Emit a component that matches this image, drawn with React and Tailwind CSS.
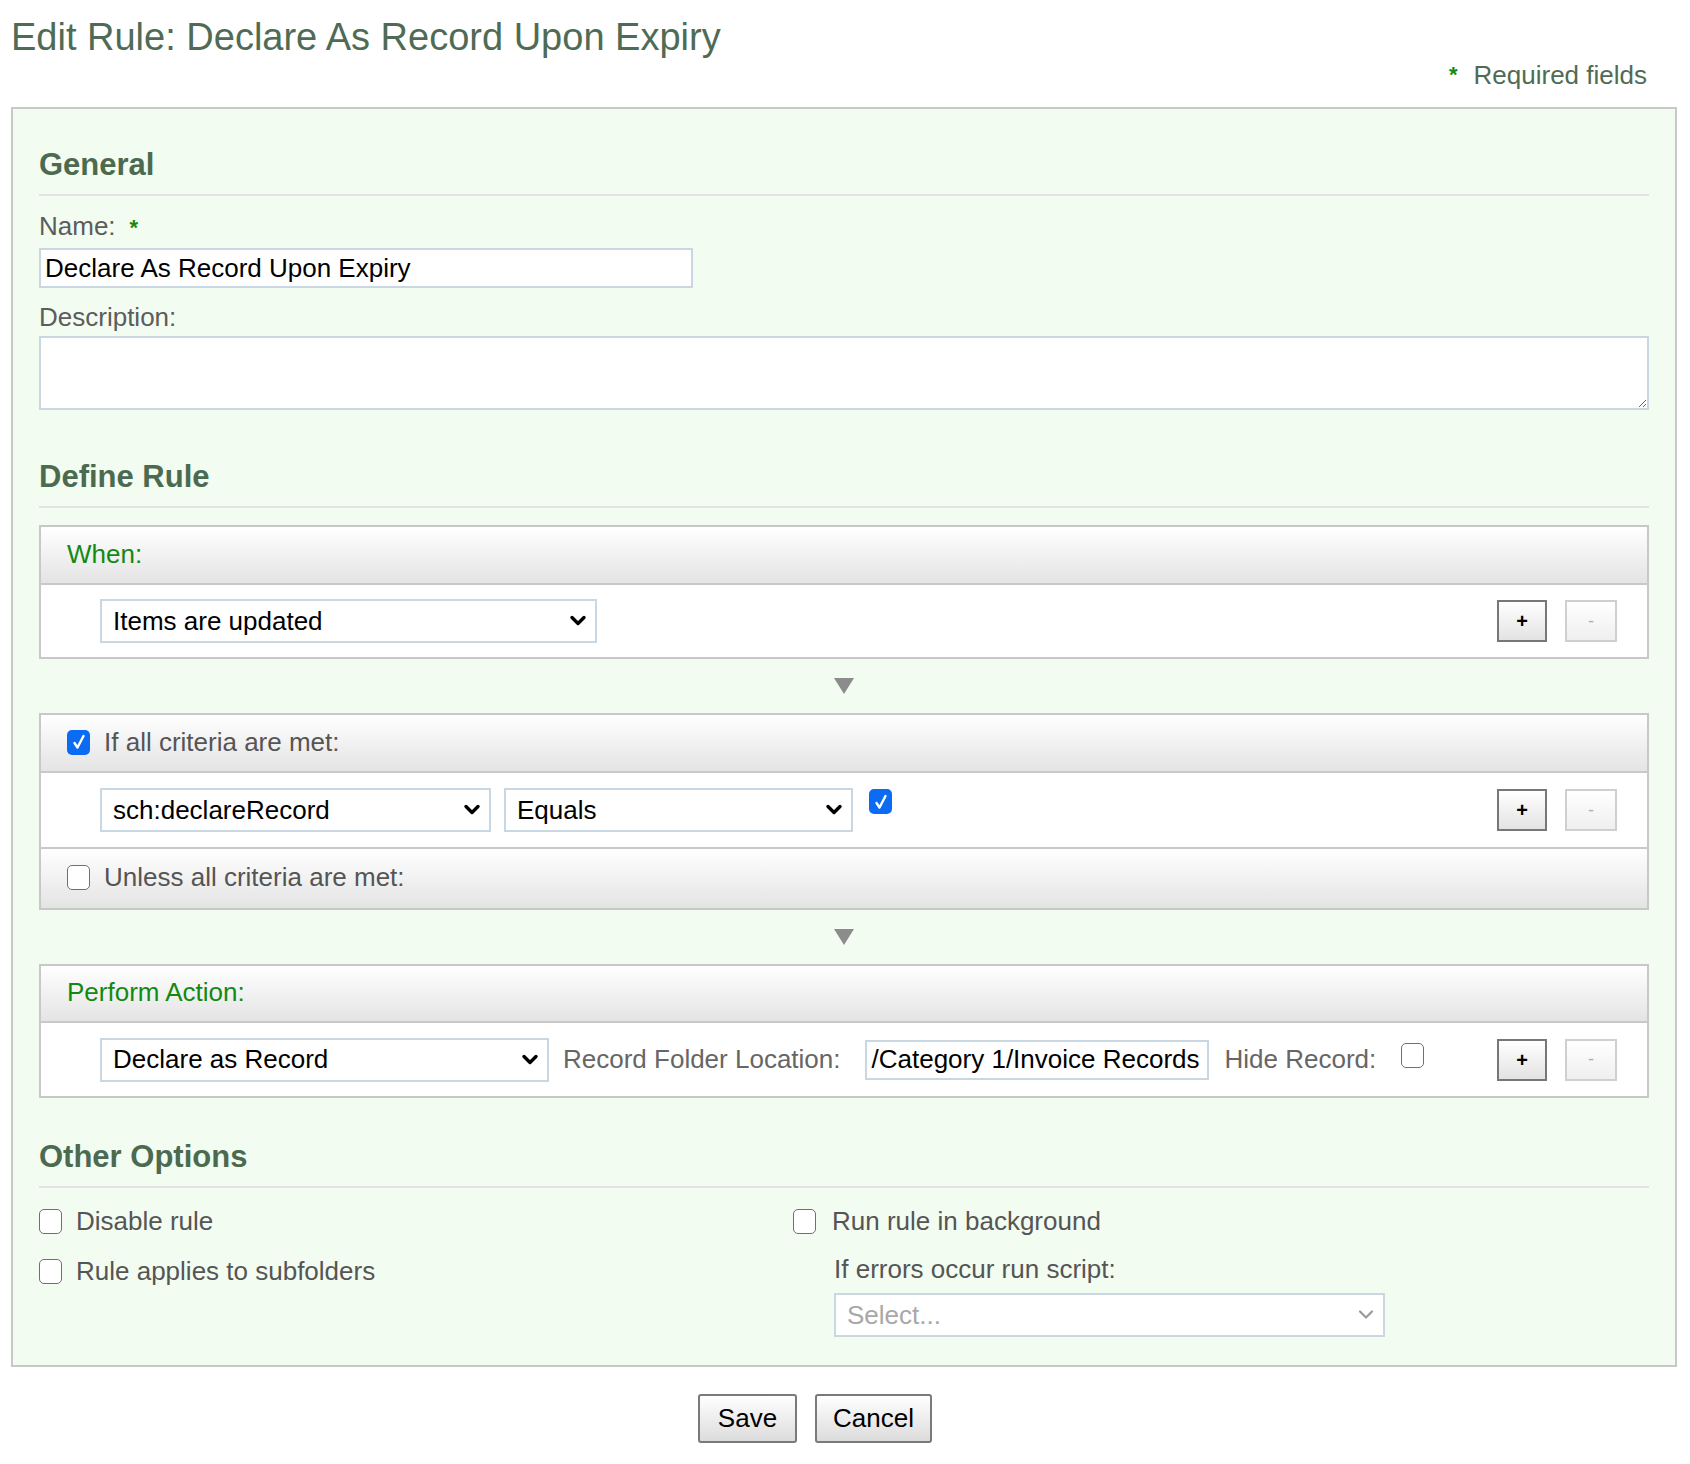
import React from 'react';

function Chevron({ color = '#000', thin }) {
  return (
    <svg width="18" height="12" viewBox="0 0 18 12" className="shrink-0">
      <polyline
        points="3,2.5 9,8.5 15,2.5"
        fill="none"
        stroke={color}
        strokeWidth={thin ? 2.2 : 3.4}
        strokeLinecap="round"
        strokeLinejoin="round"
      />
    </svg>
  );
}

function FakeSelect({ value, width, placeholder }) {
  return (
    <div
      className={`${width} h-[44px] flex items-center justify-between border-2 border-[#c9d7e3] bg-white pl-[11px] pr-[8px] text-[26px]`}
    >
      <span className={placeholder ? 'text-[#a8a8a8]' : 'text-black'}>{value}</span>
      <Chevron color={placeholder ? '#9a9a9a' : '#000'} thin={placeholder} />
    </div>
  );
}

function Check({ checked }) {
  if (checked) {
    return (
      <span className="inline-flex w-[23px] h-[25px] shrink-0 items-center justify-center rounded-[5px] bg-[#0b6cf3]">
        <svg width="14" height="16" viewBox="0 0 14 16">
          <polyline points="2.5,9 5.5,13.5 11.5,2" fill="none" stroke="#fff" strokeWidth="2.4" strokeLinecap="round" strokeLinejoin="round" />
        </svg>
      </span>
    );
  }
  return <span className="inline-block w-[23px] h-[25px] shrink-0 rounded-[5px] border-[1.5px] border-[#707070] bg-white"></span>;
}

function PlusMinus() {
  return (
    <div className="ml-auto flex items-center gap-[18px] pr-[30px]">
      <div className="w-[50px] h-[42px] flex items-center justify-center border-2 border-[#777] bg-linear-to-b from-white to-[#e3e3e3] text-[20px] font-bold text-black">
        +
      </div>
      <div className="w-[52px] h-[42px] flex items-center justify-center border-2 border-[#cfcfcf] bg-linear-to-b from-white to-[#efefef] text-[18px] text-[#b0b0b0]">
        -
      </div>
    </div>
  );
}

function Arrow() {
  return (
    <div className="h-[54px] flex items-center justify-center">
      <svg width="22" height="18" viewBox="0 0 22 18">
        <polygon points="1,1 21,1 11,17" fill="#8c8c8c" />
      </svg>
    </div>
  );
}

function BoxHeader({ children, height = 'h-[58px]', last }) {
  return (
    <div
      className={`${height} flex items-center gap-[14px] pl-[26px] pb-[2px] bg-linear-to-b from-white to-[#e4e4e4] text-[26px] ${
        last ? '' : 'border-b-2 border-[#c8c8c8]'
      }`}
    >
      {children}
    </div>
  );
}

function Heading({ children, className = '' }) {
  return (
    <h2 className={`text-[31px] font-bold leading-[36px] text-[#4b6a50] pb-[11px] border-b-2 border-[#e3e3e3] ${className}`}>
      {children}
    </h2>
  );
}

export default function App() {
  return (
    <div className="min-h-screen bg-white font-['Liberation_Sans',Arial,sans-serif]">
      {/* Title */}
      <h1 className="pl-[11px] pt-[14px] text-[38px] leading-[46px] text-[#4f6b55]">
        Edit Rule: Declare As Record Upon Expiry
      </h1>
      <div className="flex justify-end items-center pr-[43px] text-[26px] leading-[30px] text-[#4f6b55]">
        <span className="text-[#128a12] font-bold text-[22px] mr-[16px]">*</span>
        Required fields
      </div>

      {/* Form panel */}
      <div className="mt-[17px] ml-[11px] mr-[13px] border-2 border-[#c8c8c8] bg-[#f2fcf0] px-[26px] pt-[38px] pb-[28px]">
        <Heading>General</Heading>

        <div className="mt-[15px] text-[26px] leading-[30px] text-[#5c5c5c]">
          Name:<span className="ml-[14px] text-[#128a12] font-bold text-[22px]">*</span>
        </div>
        <input
          readOnly
          value="Declare As Record Upon Expiry"
          className="mt-[5px] block w-[654px] h-[40px] border-2 border-[#c9d7e3] bg-white px-[4px] text-[26px] text-black outline-none"
        />

        <div className="mt-[14px] text-[26px] leading-[30px] text-[#5c5c5c]">Description:</div>
        <textarea
          readOnly
          className="mt-[4px] block w-full h-[74px] border-2 border-[#c9d7e3] bg-white outline-none"
        ></textarea>

        <Heading className="mt-[49px]">Define Rule</Heading>

        {/* When */}
        <div className="mt-[17px] border-2 border-[#c8c8c8] bg-white">
          <BoxHeader>
            <span className="text-[#128a12]">When:</span>
          </BoxHeader>
          <div className="h-[72px] flex items-center pl-[59px]">
            <FakeSelect value="Items are updated" width="w-[497px]" />
            <PlusMinus />
          </div>
        </div>

        <Arrow />

        {/* Criteria */}
        <div className="border-2 border-[#c8c8c8] bg-white">
          <BoxHeader>
            <Check checked />
            <span className="text-[#555]">If all criteria are met:</span>
          </BoxHeader>
          <div className="h-[76px] flex items-center pl-[59px] border-b-2 border-[#c8c8c8]">
            <FakeSelect value="sch:declareRecord" width="w-[391px]" />
            <div className="ml-[13px]">
              <FakeSelect value="Equals" width="w-[349px]" />
            </div>
            <div className="ml-[16px] self-start mt-[16px]">
              <Check checked />
            </div>
            <PlusMinus />
          </div>
          <BoxHeader height="h-[59px]" last>
            <Check />
            <span className="text-[#555]">Unless all criteria are met:</span>
          </BoxHeader>
        </div>

        <Arrow />

        {/* Action */}
        <div className="border-2 border-[#c8c8c8] bg-white">
          <BoxHeader height="h-[57px]">
            <span className="text-[#128a12]">Perform Action:</span>
          </BoxHeader>
          <div className="h-[73px] flex items-center pl-[59px] text-[26px]">
            <FakeSelect value="Declare as Record" width="w-[449px]" />
            <span className="ml-[14px] text-[#666]">Record Folder Location:</span>
            <input
              readOnly
              value="/Category 1/Invoice Records Folder"
              className="ml-[25px] w-[344px] h-[40px] border-2 border-[#c9d7e3] bg-white pl-[4px] text-[26px] text-black outline-none"
            />
            <span className="ml-[15px] text-[#666]">Hide Record:</span>
            <div className="ml-[25px] self-start mt-[17px]">
              <Check />
            </div>
            <PlusMinus />
          </div>
        </div>

        <Heading className="mt-[41px]">Other Options</Heading>

        <div className="mt-[18px] flex text-[26px] leading-[30px] text-[#555]">
          <div className="w-[754px] flex flex-col gap-[20px]">
            <div className="flex items-center gap-[14px]">
              <Check />
              <span>Disable rule</span>
            </div>
            <div className="flex items-center gap-[14px]">
              <Check />
              <span>Rule applies to subfolders</span>
            </div>
          </div>
          <div className="flex flex-col">
            <div className="flex items-center gap-[16px]">
              <Check />
              <span>Run rule in background</span>
            </div>
            <div className="pl-[41px] mt-[18px]">
              <div>If errors occur run script:</div>
              <div className="mt-[9px]">
                <FakeSelect value="Select..." width="w-[551px]" placeholder />
              </div>
            </div>
          </div>
        </div>
      </div>

      {/* Buttons */}
      <div className="mt-[27px] pb-[22px] flex justify-center gap-[18px] pr-[60px] text-[26px] text-black">
        <button className="w-[99px] h-[49px] border-2 border-[#7a7a7a] rounded-[3px] bg-linear-to-b from-white to-[#dcdcdc]">
          Save
        </button>
        <button className="w-[117px] h-[49px] border-2 border-[#7a7a7a] rounded-[3px] bg-linear-to-b from-white to-[#dcdcdc]">
          Cancel
        </button>
      </div>
    </div>
  );
}
